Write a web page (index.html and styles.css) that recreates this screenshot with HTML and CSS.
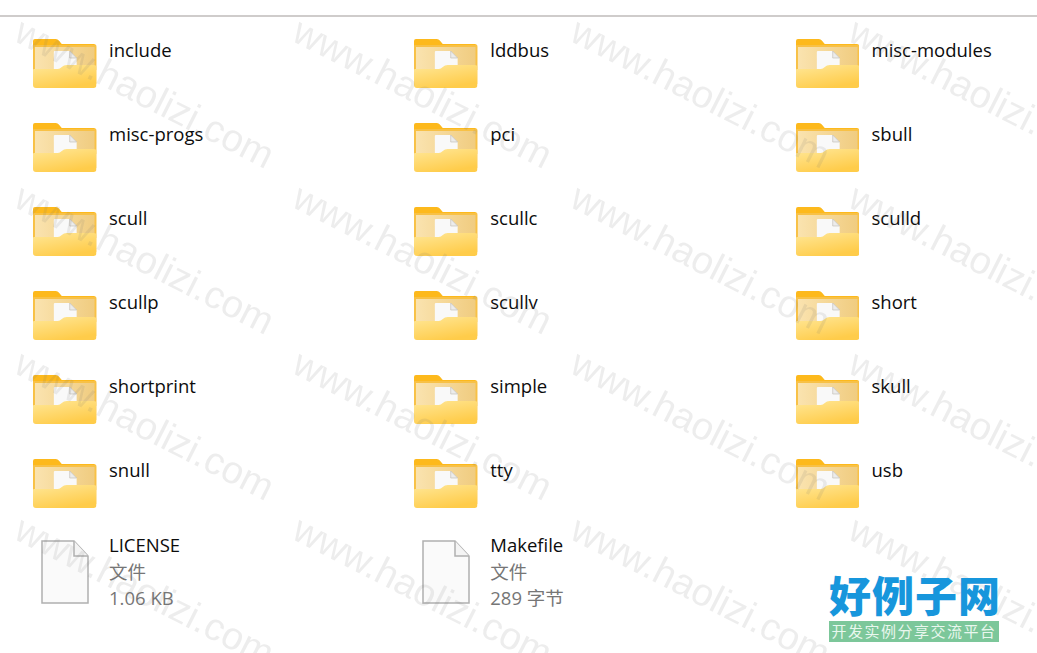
FILE: index.html
```html
<!DOCTYPE html>
<html lang="en">
<head>
    <meta charset="UTF-8">
    <meta name="viewport" content="width=device-width, initial-scale=1.0">
    <title>Folder listing</title>
    <link rel="stylesheet" href="styles.css">
</head>
<body>
    <!-- Shared icons -->
    <svg class="defs" width="0" height="0">
        <defs>
            <linearGradient id="back-fill" x1="0" y1="0" x2="1" y2="0">
                <stop offset="0" stop-color="#fae3af"/>
                <stop offset="1" stop-color="#f0cc80"/>
            </linearGradient>
            <linearGradient id="front-fill" x1="0" y1="0" x2="0.5" y2="1">
                <stop offset="0" stop-color="#ffe797"/>
                <stop offset="1" stop-color="#ffcc4a"/>
            </linearGradient>
            <symbol id="folder" viewBox="0 0 64 50" preserveAspectRatio="none">
                <path d="M0 3q0-2 2-2h21q2 0 3 1.500l3 3.500h32q3 0 3 3v37H0z" fill="#fdb91c"/>
                <path d="M0 8q0-1 1-1h62q1 0 1 1v24H0z" fill="#f8c146"/>
                <path d="M2 9h60v25H2z" fill="url(#back-fill)"/>
                <path d="M21 14q0-1 1-1h15l7 7v14H21z" fill="#f9f9f9"/>
                <path d="M37 13v7h7z" fill="#ececec" stroke="#bdb9b0" stroke-width="0.6"/>
                <path d="M0 32q0-1 1-1h24q2 0 4-2t5-2h27q3 0 3 2v18q0 3-3 3H3q-3 0-3-3z" fill="url(#front-fill)"/>
            </symbol>
            <symbol id="file" viewBox="0 0 48 64">
                <path d="M1 1h32L47 16v47H1z" fill="#fafafa" stroke="#b0b0b0" stroke-width="1.500"/>
                <path d="M33 1v15H47" fill="#f4f4f4" stroke="#b0b0b0" stroke-width="1.500"/>
            </symbol>
        </defs>
    </svg>

    <div class="top-line"></div>

    <div class="listing">
        <div class="item"><svg class="folder-icon"><use href="#folder"/></svg><span class="name">include</span></div>
        <div class="item"><svg class="folder-icon"><use href="#folder"/></svg><span class="name">lddbus</span></div>
        <div class="item"><svg class="folder-icon"><use href="#folder"/></svg><span class="name">misc-modules</span></div>

        <div class="item"><svg class="folder-icon"><use href="#folder"/></svg><span class="name">misc-progs</span></div>
        <div class="item"><svg class="folder-icon"><use href="#folder"/></svg><span class="name">pci</span></div>
        <div class="item"><svg class="folder-icon"><use href="#folder"/></svg><span class="name">sbull</span></div>

        <div class="item"><svg class="folder-icon"><use href="#folder"/></svg><span class="name">scull</span></div>
        <div class="item"><svg class="folder-icon"><use href="#folder"/></svg><span class="name">scullc</span></div>
        <div class="item"><svg class="folder-icon"><use href="#folder"/></svg><span class="name">sculld</span></div>

        <div class="item"><svg class="folder-icon"><use href="#folder"/></svg><span class="name">scullp</span></div>
        <div class="item"><svg class="folder-icon"><use href="#folder"/></svg><span class="name">scullv</span></div>
        <div class="item"><svg class="folder-icon"><use href="#folder"/></svg><span class="name">short</span></div>

        <div class="item"><svg class="folder-icon"><use href="#folder"/></svg><span class="name">shortprint</span></div>
        <div class="item"><svg class="folder-icon"><use href="#folder"/></svg><span class="name">simple</span></div>
        <div class="item"><svg class="folder-icon"><use href="#folder"/></svg><span class="name">skull</span></div>

        <div class="item"><svg class="folder-icon"><use href="#folder"/></svg><span class="name">snull</span></div>
        <div class="item"><svg class="folder-icon"><use href="#folder"/></svg><span class="name">tty</span></div>
        <div class="item"><svg class="folder-icon"><use href="#folder"/></svg><span class="name">usb</span></div>

        <div class="item file-item">
            <svg class="file-icon"><use href="#file"/></svg>
            <div class="file-text">
                <span class="name">LICENSE</span>
                <span class="meta">文件</span>
                <span class="meta">1.06 KB</span>
            </div>
        </div>
        <div class="item file-item">
            <svg class="file-icon"><use href="#file"/></svg>
            <div class="file-text">
                <span class="name">Makefile</span>
                <span class="meta">文件</span>
                <span class="meta">289 字节</span>
            </div>
        </div>
    </div>

    <!-- Watermark over the whole shot, below the top line -->
    <svg class="watermark" width="1037" height="653">
        <defs>
            <pattern id="mark" x="12" y="14" width="278" height="166" patternUnits="userSpaceOnUse">
                <text class="mark-text" transform="translate(0 26) rotate(27)">www.haolizi.com</text>
            </pattern>
        </defs>
        <rect y="17" width="1037" height="636" fill="url(#mark)"/>
    </svg>

    <div class="logo">
        <div class="logo-title">好例子网</div>
        <div class="logo-sub">开发实例分享交流平台</div>
    </div>
</body>
</html>
```

FILE: styles.css
```css
/* Global Styles */
html, body {
    margin: 0;
    padding: 0;
    background: #fff;
    overflow: hidden;
    font-family: 'Open Sans', 'Noto Sans CJK SC', sans-serif;
}

body {
    position: relative;
    width: 1037px;
    height: 653px;
}

.defs {
    position: absolute;
}

.top-line {
    height: 15px;
    border-bottom: 2px solid #cfcccb;
}

/* Listing */
.listing {
    display: grid;
    grid-template-columns: 381.25px 381.25px 1fr;
    grid-auto-rows: 84px;
    padding: 20px 0 0 33px;
}

.item {
    display: flex;
    align-items: flex-start;
    gap: 12.500px;
}

.folder-icon {
    width: 63.500px;
    height: 50px;
    margin-top: 1px;
    flex: none;
}

.name {
    display: block;
    font-size: 18.500px;
    line-height: 26px;
    color: #0c0c0c;
}

/* Files in the last row */
.file-item {
    margin-top: -9px;
    gap: 20px;
    padding-left: 8px;
}

.file-icon {
    width: 48px;
    height: 64px;
    margin-top: 8px;
    flex: none;
}

.meta {
    display: block;
    font-size: 18.500px;
    line-height: 26px;
    color: #767676;
}

.name + .meta {
    margin-top: 1px;
}

/* Overlays */
.watermark {
    position: absolute;
    top: 0;
    left: 0;
    pointer-events: none;
}

.mark-text {
    font-family: 'Liberation Sans', sans-serif;
    font-size: 38.500px;
    fill: rgba(110, 110, 110, 0.12);
}

.logo {
    position: absolute;
    left: 829px;
    top: 575px;
    width: 170px;
}

.logo-title {
    font-family: 'Liberation Serif', 'Noto Sans CJK SC', sans-serif;
    font-weight: 900;
    font-size: 42px;
    line-height: 46px;
    letter-spacing: 1px;
    white-space: nowrap;
    color: #1796dc;
}

.logo-sub {
    height: 21px;
    background: #7cc79a;
    color: #e9f7ee;
    font-family: 'Liberation Sans', 'Noto Sans CJK SC', sans-serif;
    font-size: 15px;
    line-height: 21px;
    letter-spacing: 1.500px;
    text-align: center;
    white-space: nowrap;
}
```
